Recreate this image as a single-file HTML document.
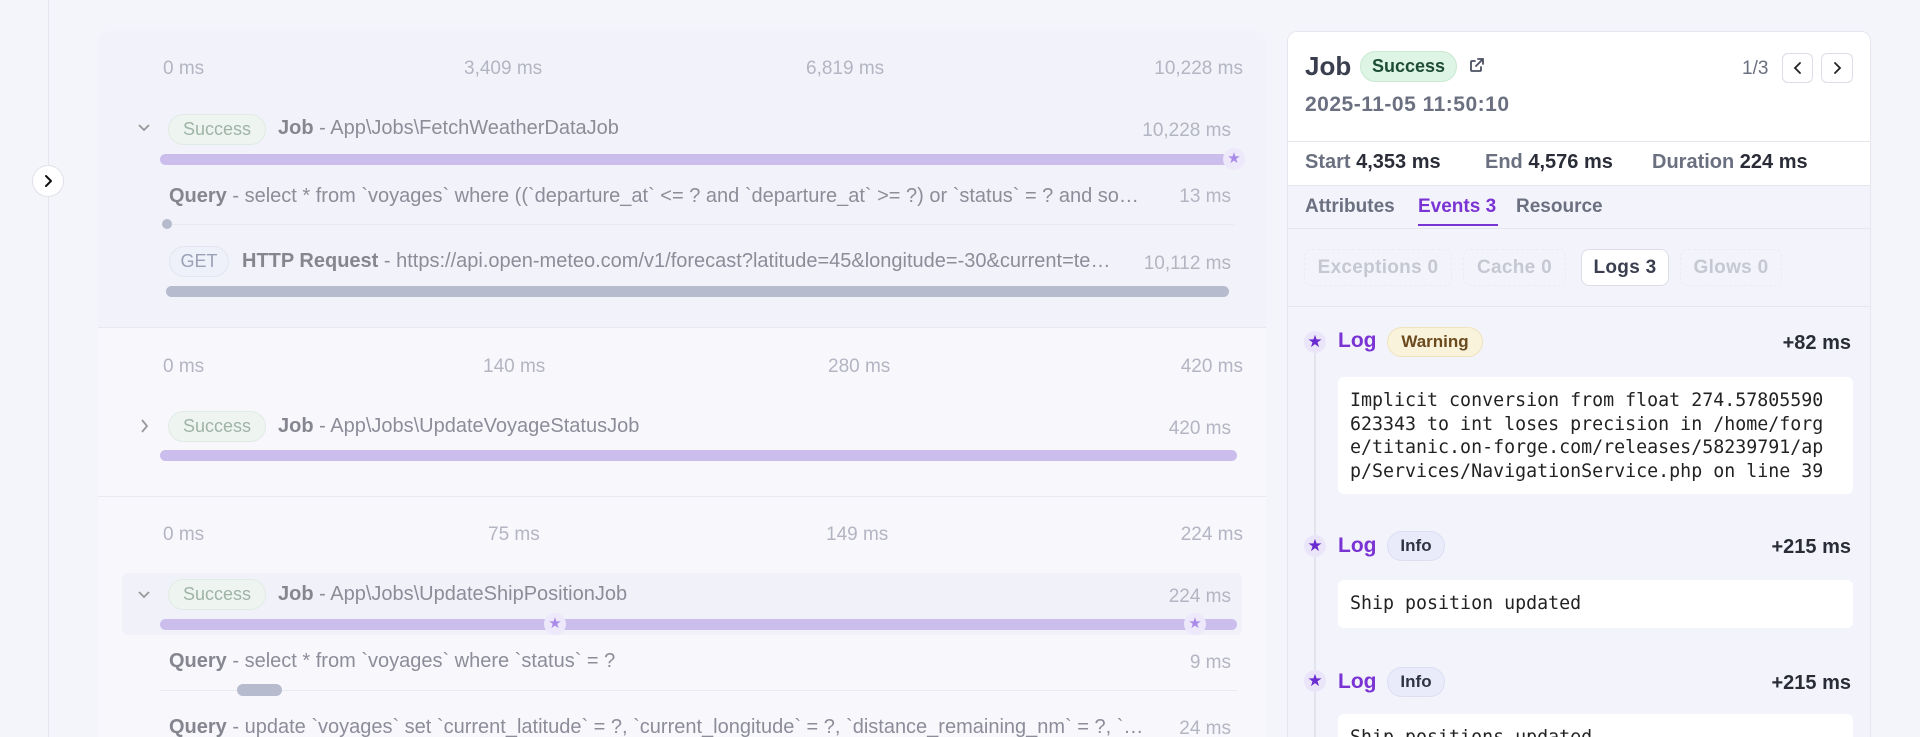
<!DOCTYPE html>
<html style="width:1920px;height:737px;overflow:hidden"><head><meta charset="utf-8"><style>
*{box-sizing:border-box;margin:0;padding:0}
body{width:1920px;height:737px;overflow:hidden;background:#f4f4fb;font-family:"Liberation Sans",sans-serif;position:relative}
.a{position:absolute;white-space:nowrap}
.ax{color:#b3b5c2;font-size:19px}
.dim{color:#8c8d99;font-size:20px}
.dim b{color:#85868f}
.badge{position:absolute;border-radius:16px;font-size:18px;text-align:center}
.sbg{background:#eef5f1;border:1px solid #e1ebe5;color:#9fb3a8}
.bar{position:absolute;height:11px;border-radius:6px;background:#cbbdec}
.star{position:absolute;width:22px;height:22px;border-radius:50%;background:#ede8fa;color:#a98ae8;font-size:15px;text-align:center;line-height:22px}
.r{font-family:"Liberation Sans","DejaVu Sans",sans-serif}
.filt{position:absolute;top:249px;height:37px;border:1px dashed #ebebf3;border-radius:8px;color:#c5c7d2;font-size:19px;font-weight:bold;text-align:center;line-height:35px;letter-spacing:.3px}
.log{position:absolute;left:1338px;font-size:21px;color:#7b34d4;font-weight:bold}
.ms{position:absolute;right:69px;font-size:20px;color:#2a2d37;font-weight:bold}
.box{position:absolute;left:1338px;width:515px;background:#fff;border-radius:6px;font-family:"DejaVu Sans Mono","Liberation Mono",monospace;font-size:18.3px;color:#222;padding:12px 12px;line-height:23.6px;white-space:pre}
.ls{position:absolute;left:1304px;width:22px;height:22px;border-radius:50%;background:#ebe5fa;color:#6a2bd0;font-size:17px;text-align:center;line-height:22px}
</style></head><body>
<div class="a" style="left:48px;top:0;width:1px;height:737px;background:#e6e6ef"></div>
<div class="a" style="left:32px;top:165px;width:32px;height:32px;border-radius:50%;background:#fff;border:1px solid #e0e0ea;text-align:center"><svg width="14" height="14" viewBox="0 0 14 14" style="margin-top:8px"><path d="M5 2l5 5-5 5" stroke="#111" stroke-width="2" fill="none" stroke-linecap="round" stroke-linejoin="round"/></svg></div>

<div class="a" style="left:98px;top:31px;width:1168px;height:706px;background:#f7f7fc;border-radius:10px 10px 0 0"></div>
<div class="a" style="left:98px;top:31px;width:1168px;height:296px;background:#f2f2fa;border-radius:10px 10px 0 0"></div>
<div class="a" style="left:98px;top:327px;width:1168px;height:1px;background:#e8e8f0"></div>
<div class="a" style="left:98px;top:496px;width:1168px;height:1px;background:#e8e8f0"></div>

<!-- section 1 -->
<div class="a ax" style="left:163px;top:58px">0 ms</div>
<div class="a ax" style="left:464px;top:58px">3,409 ms</div>
<div class="a ax" style="left:806px;top:58px">6,819 ms</div>
<div class="a ax" style="right:677px;top:58px">10,228 ms</div>
<div class="a" style="left:136px;top:120px"><svg width="16" height="16"><path d="M3 5l5 5 5-5" stroke="#999" stroke-width="1.8" fill="none"/></svg></div>
<div class="badge sbg" style="left:168px;top:114px;width:98px;height:31px;line-height:29px">Success</div>
<div class="a dim" style="left:278px;top:117px"><b>Job</b> - App\Jobs\FetchWeatherDataJob</div>
<div class="a ax" style="right:689px;top:120px">10,228 ms</div>
<div class="bar" style="left:160px;top:154px;width:1077px"></div>
<div class="star" style="left:1223px;top:148px">★</div>
<div class="a dim" style="left:169px;top:185px;width:980px;overflow:hidden;text-overflow:ellipsis"><b>Query</b> - select * from `voyages` where ((`departure_at` &lt;= ? and `departure_at` &gt;= ?) or `status` = ? and something</div>
<div class="a ax" style="right:689px;top:186px">13 ms</div>
<div class="a" style="left:166px;top:224px;width:1068px;height:1px;background:#e9e9f1"></div>
<div class="a" style="left:162px;top:219px;width:10px;height:10px;border-radius:5px;background:#b5bbcc"></div>
<div class="badge" style="left:169px;top:246px;width:60px;height:31px;line-height:29px;background:#eef0fa;border:1px solid #e3e5f2;color:#9ca0b5">GET</div>
<div class="a dim" style="left:242px;top:250px;width:876px;overflow:hidden;text-overflow:ellipsis"><b>HTTP Request</b> - https://api.open-meteo.com/v1/forecast?latitude=45&amp;longitude=-30&amp;current=temperature_2m,wind_speed</div>
<div class="a ax" style="right:689px;top:253px">10,112 ms</div>
<div class="bar" style="left:166px;top:286px;width:1063px;background:#b6bccd"></div>

<!-- section 2 -->
<div class="a ax" style="left:163px;top:356px">0 ms</div>
<div class="a ax" style="left:483px;top:356px">140 ms</div>
<div class="a ax" style="left:828px;top:356px">280 ms</div>
<div class="a ax" style="right:677px;top:356px">420 ms</div>
<div class="a" style="left:137px;top:418px"><svg width="16" height="16"><path d="M5 2l5 6-5 6" stroke="#999" stroke-width="1.8" fill="none"/></svg></div>
<div class="badge sbg" style="left:168px;top:411px;width:98px;height:31px;line-height:29px">Success</div>
<div class="a dim" style="left:278px;top:415px"><b>Job</b> - App\Jobs\UpdateVoyageStatusJob</div>
<div class="a ax" style="right:689px;top:418px">420 ms</div>
<div class="bar" style="left:160px;top:450px;width:1077px"></div>

<!-- section 3 -->
<div class="a ax" style="left:163px;top:524px">0 ms</div>
<div class="a ax" style="left:488px;top:524px">75 ms</div>
<div class="a ax" style="left:826px;top:524px">149 ms</div>
<div class="a ax" style="right:677px;top:524px">224 ms</div>
<div class="a" style="left:122px;top:573px;width:1120px;height:62px;background:#f1f1fa;border-radius:6px"></div>
<div class="a" style="left:136px;top:587px"><svg width="16" height="16"><path d="M3 5l5 5 5-5" stroke="#999" stroke-width="1.8" fill="none"/></svg></div>
<div class="badge sbg" style="left:168px;top:579px;width:98px;height:31px;line-height:29px">Success</div>
<div class="a dim" style="left:278px;top:583px"><b>Job</b> - App\Jobs\UpdateShipPositionJob</div>
<div class="a ax" style="right:689px;top:586px">224 ms</div>
<div class="bar" style="left:160px;top:619px;width:1077px"></div>
<div class="star" style="left:544px;top:613px">★</div>
<div class="star" style="left:1184px;top:613px">★</div>
<div class="a dim" style="left:169px;top:650px"><b>Query</b> - select * from `voyages` where `status` = ?</div>
<div class="a ax" style="right:689px;top:652px">9 ms</div>
<div class="a" style="left:160px;top:690px;width:1077px;height:1px;background:#e9e9f1"></div>
<div class="a" style="left:237px;top:684px;width:45px;height:12px;border-radius:6px;background:#b6bccd"></div>
<div class="a dim" style="left:169px;top:716px;width:978px;overflow:hidden;text-overflow:ellipsis"><b>Query</b> - update `voyages` set `current_latitude` = ?, `current_longitude` = ?, `distance_remaining_nm` = ?, `status` = ?</div>
<div class="a ax" style="right:689px;top:718px">24 ms</div>

<!-- right panel -->
<div class="a" style="left:1287px;top:31px;width:584px;height:706px;background:#f3f3fb;border:1px solid #e6e6ef;border-bottom:none;border-radius:10px 10px 0 0;overflow:hidden">
 <div style="height:110px;background:#fff;border-bottom:1px solid #e6e6ef"></div>
 <div style="height:44px;background:#fff;border-bottom:1px solid #e6e6ef"></div>
</div>
<div class="a r" style="left:1305px;top:51px;font-size:26px;font-weight:bold;color:#3a3f4f">Job</div>
<div class="badge r" style="left:1360px;top:51px;width:97px;height:31px;line-height:29px;background:#def4e4;border:1px solid #c9e9d3;color:#1d4d33;font-weight:bold;font-size:18px">Success</div>
<div class="a" style="left:1469px;top:57px"><svg width="16" height="16" viewBox="0 0 16 16" fill="none" stroke="#4a5061" stroke-width="1.8" stroke-linecap="round"><path d="M9 2h5v5M14 2L7 9M12 10v3a1 1 0 0 1-1 1H3a1 1 0 0 1-1-1V5a1 1 0 0 1 1-1h3"/></svg></div>
<div class="a r" style="left:1742px;top:58px;font-size:19px;color:#6b7080">1/3</div>
<div class="a" style="left:1782px;top:53px;width:31px;height:30px;background:#fff;border:1px solid #dcdde6;border-radius:6px;text-align:center"><svg width="14" height="14" style="margin-top:7px"><path d="M9 2L4 7l5 5" stroke="#222" stroke-width="1.8" fill="none" stroke-linecap="round"/></svg></div>
<div class="a" style="left:1821px;top:53px;width:32px;height:30px;background:#fff;border:1px solid #dcdde6;border-radius:6px;text-align:center"><svg width="14" height="14" style="margin-top:7px"><path d="M5 2l5 5-5 5" stroke="#222" stroke-width="1.8" fill="none" stroke-linecap="round"/></svg></div>
<div class="a r" style="left:1305px;top:93px;font-size:21px;font-weight:bold;color:#6b7080;letter-spacing:.5px">2025-11-05 11:50:10</div>
<div class="a r" style="left:1305px;top:151px;font-size:20px;font-weight:bold;color:#6b7080">Start <span style="color:#2a2d37">4,353 ms</span></div>
<div class="a r" style="left:1485px;top:151px;font-size:20px;font-weight:bold;color:#6b7080">End <span style="color:#2a2d37">4,576 ms</span></div>
<div class="a r" style="left:1652px;top:151px;font-size:20px;font-weight:bold;color:#6b7080">Duration <span style="color:#2a2d37">224 ms</span></div>
<div class="a r" style="left:1305px;top:196px;font-size:19px;font-weight:bold;color:#6b7080">Attributes</div>
<div class="a r" style="left:1418px;top:196px;font-size:19px;font-weight:bold;color:#7b34d4">Events 3</div>
<div class="a" style="left:1418px;top:224px;width:80px;height:2px;background:#7b34d4"></div>
<div class="a r" style="left:1516px;top:196px;font-size:19px;font-weight:bold;color:#6b7080">Resource</div>
<div class="a" style="left:1288px;top:228px;width:582px;height:1px;background:#e6e6ef"></div>
<div class="filt r" style="left:1304px;width:148px">Exceptions 0</div>
<div class="filt r" style="left:1463px;width:103px">Cache 0</div>
<div class="filt r" style="left:1581px;width:88px;background:#fff;border:1px solid #dcdde6;color:#3a3f4f">Logs 3</div>
<div class="filt r" style="left:1680px;width:102px">Glows 0</div>
<div class="a" style="left:1288px;top:306px;width:582px;height:1px;background:#e6e6ef"></div>

<div class="a" style="left:1314px;top:350px;width:2px;height:387px;background:#e3e3ee"></div>
<div class="ls" style="top:331px">★</div>
<div class="log r" style="top:329px">Log</div>
<div class="badge r" style="left:1387px;top:327px;width:96px;height:30px;line-height:28px;background:#faf3dc;border:1px solid #efe3bd;color:#6b4a1e;font-weight:bold;font-size:17px">Warning</div>
<div class="ms r" style="top:332px">+82 ms</div>
<div class="box" style="top:377px;height:117px">Implicit conversion from float 274.57805590
623343 to int loses precision in /home/forg
e/titanic.on-forge.com/releases/58239791/ap
p/Services/NavigationService.php on line 39</div>

<div class="ls" style="top:535px">★</div>
<div class="log r" style="top:534px">Log</div>
<div class="badge r" style="left:1387px;top:531px;width:58px;height:30px;line-height:28px;background:#e9ebfa;border:1px solid #dcdff2;color:#2f3442;font-weight:bold;font-size:17px">Info</div>
<div class="ms r" style="top:536px">+215 ms</div>
<div class="box" style="top:580px;height:48px">Ship position updated</div>

<div class="ls" style="top:670px">★</div>
<div class="log r" style="top:670px">Log</div>
<div class="badge r" style="left:1387px;top:667px;width:58px;height:30px;line-height:28px;background:#e9ebfa;border:1px solid #dcdff2;color:#2f3442;font-weight:bold;font-size:17px">Info</div>
<div class="ms r" style="top:672px">+215 ms</div>
<div class="box" style="top:714px;height:23px;overflow:hidden;border-radius:6px 6px 0 0">Ship positions updated</div>
</body></html>
